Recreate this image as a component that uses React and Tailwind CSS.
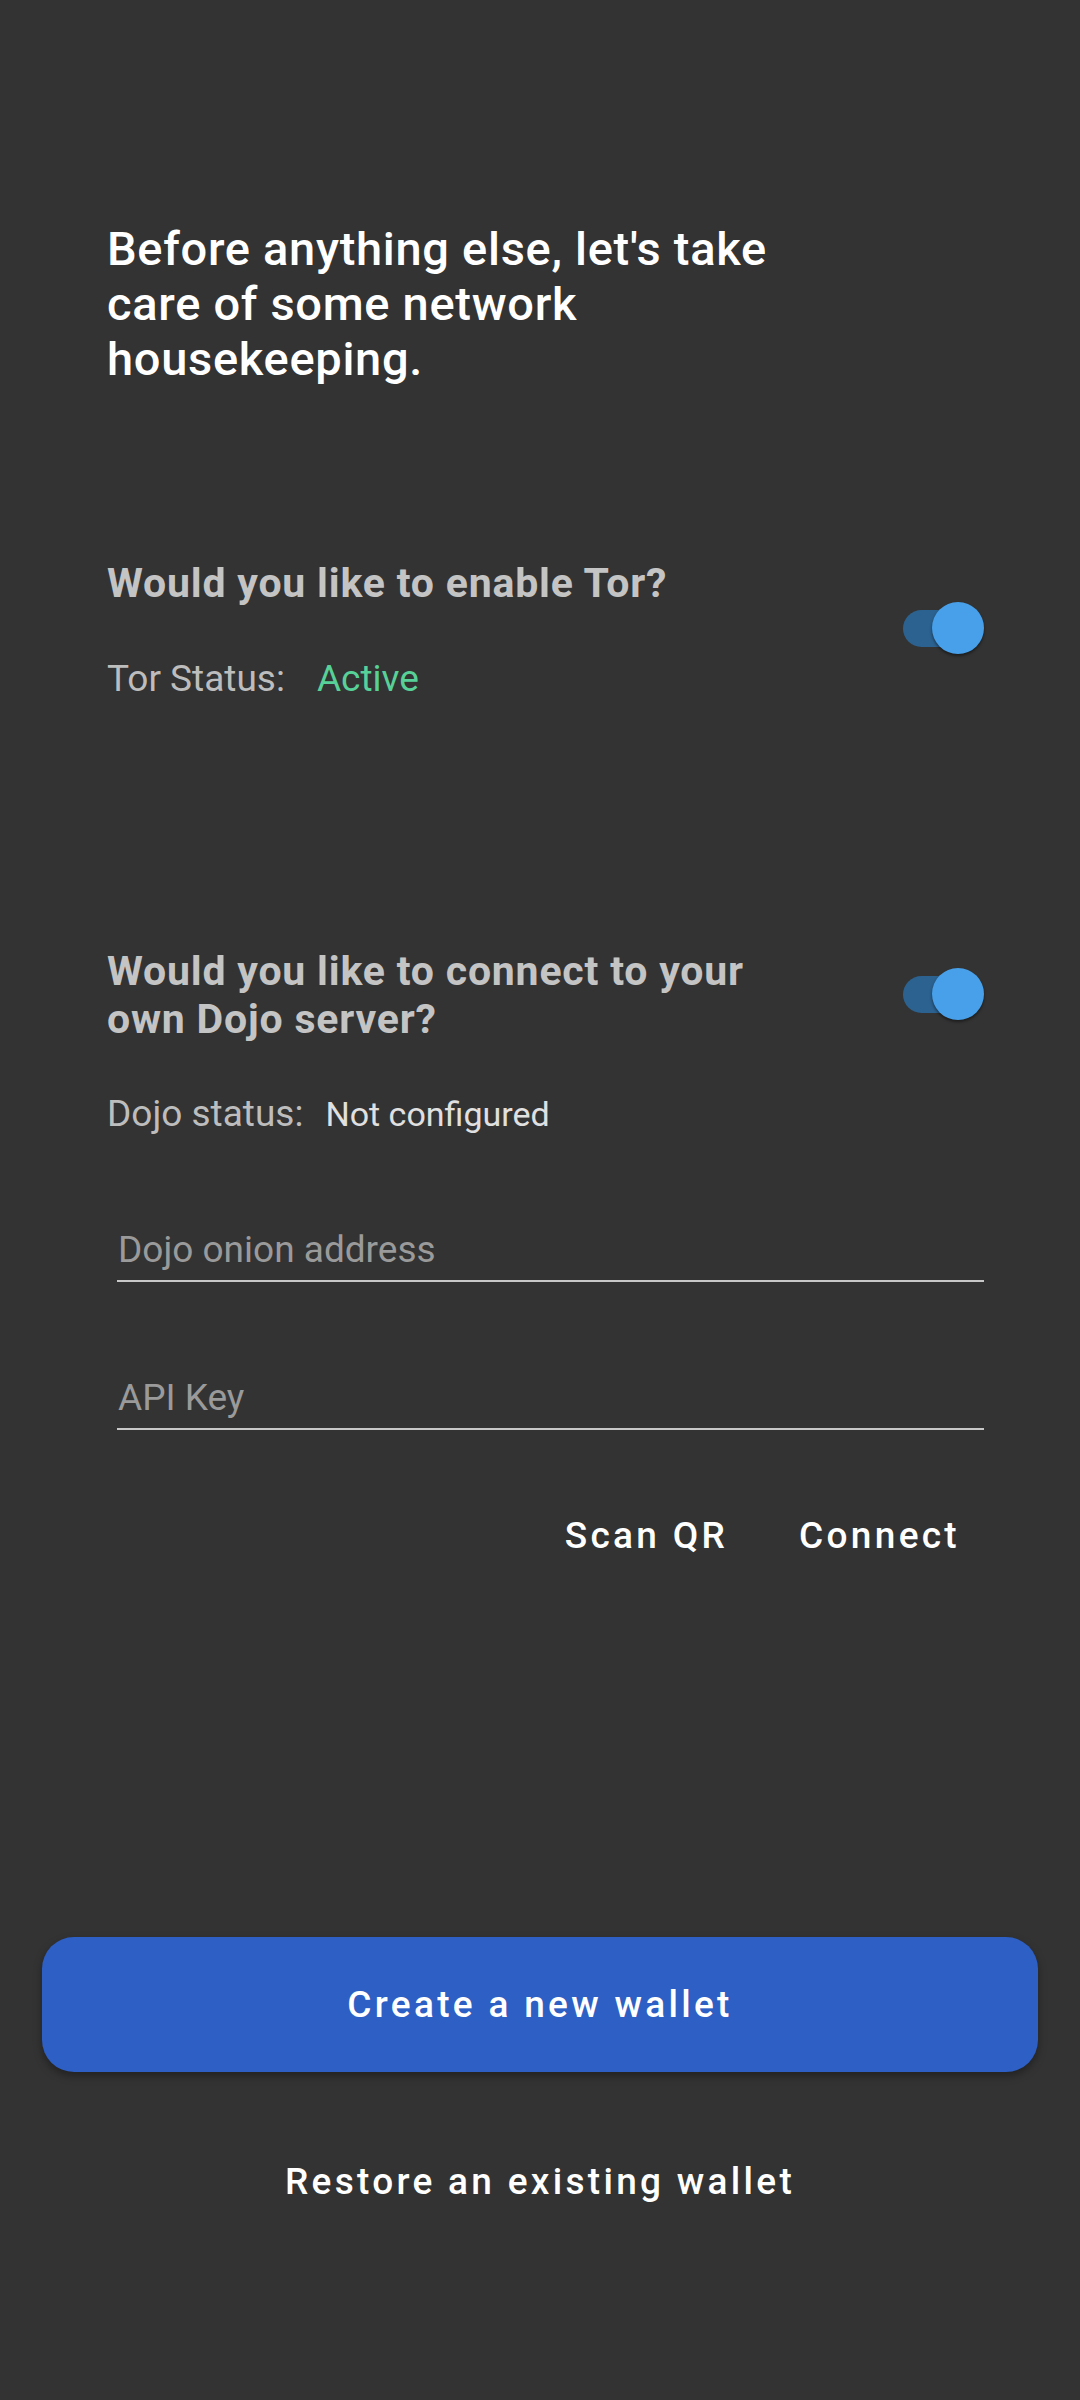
import React from "react";

function Toggle() {
  return (
    <div className="relative w-[81px] h-[52px] shrink-0">
      <div className="absolute left-0 top-[8px] w-[73px] h-[37px] rounded-full bg-[#2c6290]" />
      <div className="absolute right-0 top-0 w-[52px] h-[52px] rounded-full bg-[#47a0e9] shadow-[0_2px_3px_rgba(0,0,0,0.45)]" />
    </div>
  );
}

export default function App() {
  return (
    <div className="min-h-[2400px] w-full bg-[#333333] font-['Roboto','Liberation_Sans',sans-serif] flex flex-col">
      <h1 className="mt-[221px] ml-[107px] w-[700px] text-[47px] leading-[55px] font-medium tracking-[0.7px] text-white">
        Before anything else, let's take care of some network housekeeping.
      </h1>

      <div className="mt-[173px] pl-[107px] pr-[96px] flex items-center">
        <div className="flex flex-col">
          <div className="text-[41px] leading-[48px] font-bold tracking-[0.8px] text-[#c4c4c4]">
            Would you like to enable Tor?
          </div>
          <div className="mt-[50px] flex items-baseline text-[37px] leading-[44px]">
            <span className="text-[#bdbdbd]">Tor Status:</span>
            <span className="ml-[32px] text-[#57d197]">Active</span>
          </div>
        </div>
        <div className="ml-auto mb-[4px]">
          <Toggle />
        </div>
      </div>

      <div className="mt-[246px] pl-[107px] pr-[96px] flex items-center">
        <div className="w-[680px] text-[41px] leading-[48px] font-bold tracking-[0.8px] text-[#c4c4c4]">
          Would you like to connect to your own Dojo server?
        </div>
        <div className="ml-auto mb-[2px]">
          <Toggle />
        </div>
      </div>

      <div className="mt-[49px] pl-[107px] flex items-baseline text-[37px] leading-[44px]">
        <span className="text-[#bdbdbd]">Dojo status:</span>
        <span className="ml-[22px] text-[34px] text-[#e0e0e0]">Not configured</span>
      </div>

      <div className="mt-[92px] ml-[117px] mr-[96px] border-b-2 border-[#c8c8c8] pb-[8px]">
        <div className="pl-[1px] text-[37px] leading-[44px] text-[#9a9a9a]">Dojo onion address</div>
      </div>

      <div className="mt-[94px] ml-[117px] mr-[96px] border-b-2 border-[#c8c8c8] pb-[8px]">
        <div className="pl-[1px] text-[37px] leading-[44px] text-[#9a9a9a]">API Key</div>
      </div>

      <div className="mt-[84px] flex justify-end gap-[71px] pr-[120px] text-[37px] leading-[44px] font-medium text-white tracking-[3.3px]">
        <span>Scan QR</span>
        <span>Connect</span>
      </div>

      <div className="mt-[379px] mx-[42px] h-[135px] rounded-[32px] bg-[#2d5fc4] shadow-[0_4px_8px_rgba(0,0,0,0.35)] flex items-center justify-center">
        <span className="text-[37px] font-medium text-white tracking-[3.3px]">Create a new wallet</span>
      </div>

      <div className="mt-[88px] flex justify-center text-[37px] leading-[44px] font-medium text-white tracking-[3.3px]">
        Restore an existing wallet
      </div>
    </div>
  );
}
